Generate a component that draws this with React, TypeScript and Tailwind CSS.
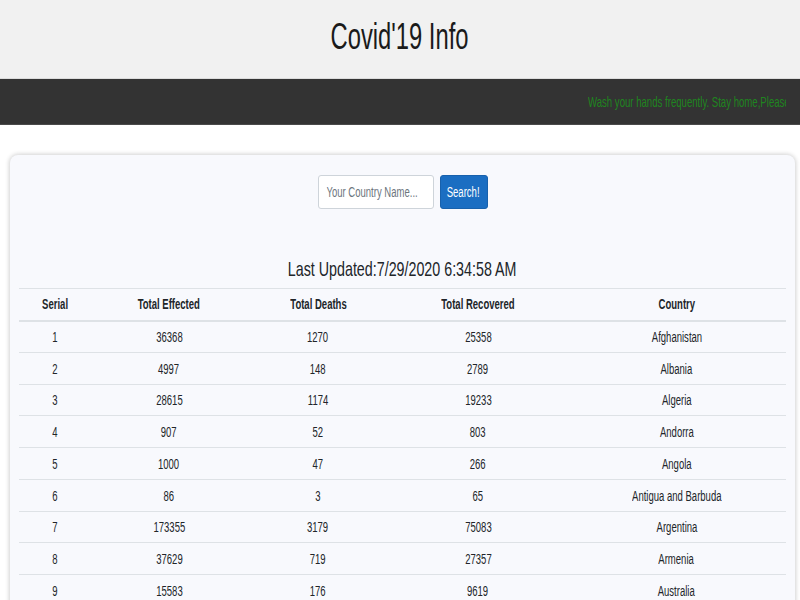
import React from "react";

const rows: [number, number, number, number, string][] = [
  [1, 36368, 1270, 25358, "Afghanistan"],
  [2, 4997, 148, 2789, "Albania"],
  [3, 28615, 1174, 19233, "Algeria"],
  [4, 907, 52, 803, "Andorra"],
  [5, 1000, 47, 266, "Angola"],
  [6, 86, 3, 65, "Antigua and Barbuda"],
  [7, 173355, 3179, 75083, "Argentina"],
  [8, 37629, 719, 27357, "Armenia"],
  [9, 15583, 176, 9619, "Australia"],
  [10, 20726, 719, 18596, "Austria"],
];

function S({ children }: { children: React.ReactNode }) {
  return <span className="inline-block whitespace-nowrap scale-x-[0.68]">{children}</span>;
}

export default function App() {
  return (
    <div
      className="w-[800px] h-[600px] overflow-hidden bg-white text-[#212529]"
      style={{ fontFamily: '"Liberation Sans", Arial, sans-serif' }}
    >
      <div className="h-[79px] bg-[#f1f1f1] border-b border-[#dcdcdc] flex items-center justify-center">
        <h1 className="text-[36px] leading-none text-[#1a1a1a] mt-[-4px] inline-block whitespace-nowrap scale-x-[0.66]">
          Covid'19 Info
        </h1>
      </div>
      <div className="h-[46px] bg-[#333333] border-b border-[#4a4a4a] flex items-center">
        <div className="ml-[588px] w-[198px] overflow-hidden">
          <span className="inline-block whitespace-nowrap origin-left scale-x-[0.64] text-[15px] text-[#1f861f]">
            Wash your hands frequently. Stay home,Please
          </span>
        </div>
      </div>
      <div className="pt-[30px]">
        <div className="ml-[10px] w-[785px] bg-[#f8f9fd] rounded-[8px] shadow-[0_0_4px_1px_rgba(0,0,0,0.18)] px-[9px] pt-[20px] h-[500px]">
          <div className="flex justify-center gap-[6px]">
            <div className="w-[116px] h-[34px] bg-white border border-[#ced4da] rounded-[3px] overflow-hidden">
              <input
                placeholder="Your Country Name..."
                className="w-[170px] h-[32px] bg-transparent px-[11px] text-[14px] placeholder:text-[#6c757d] outline-none origin-left scale-x-[0.68]"
              />
            </div>
            <button className="h-[34px] w-[48px] bg-[#1b6ec2] border border-[#1861ac] rounded-[3px] text-white text-[14px] flex items-center justify-center">
              <S>Search!</S>
            </button>
          </div>
          <div className="text-center text-[21px] mt-[48px] leading-[24px] text-[#212529]">
            <S>Last Updated:7/29/2020 6:34:58 AM</S>
          </div>
          <table className="w-full border-collapse text-[14px] mt-[7px] table-fixed">
            <colgroup>
              <col className="w-[72px]" />
              <col className="w-[156px]" />
              <col className="w-[142px]" />
              <col className="w-[178px]" />
              <col />
            </colgroup>
            <thead>
              <tr className="border-t border-[#dee2e6] border-b-2 border-b-[#dee2e6]">
                <th className="h-[32px] font-bold text-center"><S>Serial</S></th>
                <th className="font-bold text-center"><S>Total Effected</S></th>
                <th className="font-bold text-center"><S>Total Deaths</S></th>
                <th className="font-bold text-center"><S>Total Recovered</S></th>
                <th className="font-bold text-center"><S>Country</S></th>
              </tr>
            </thead>
            <tbody>
              {rows.map((r) => (
                <tr key={r[0]} className="border-b border-[#dee2e6]">
                  <td className="h-[31.75px] pt-[2px] text-center"><S>{r[0]}</S></td>
                  <td className="pt-[2px] text-center"><S>{r[1]}</S></td>
                  <td className="pt-[2px] text-center"><S>{r[2]}</S></td>
                  <td className="pt-[2px] text-center"><S>{r[3]}</S></td>
                  <td className="pt-[2px] text-center"><S>{r[4]}</S></td>
                </tr>
              ))}
            </tbody>
          </table>
        </div>
      </div>
    </div>
  );
}
